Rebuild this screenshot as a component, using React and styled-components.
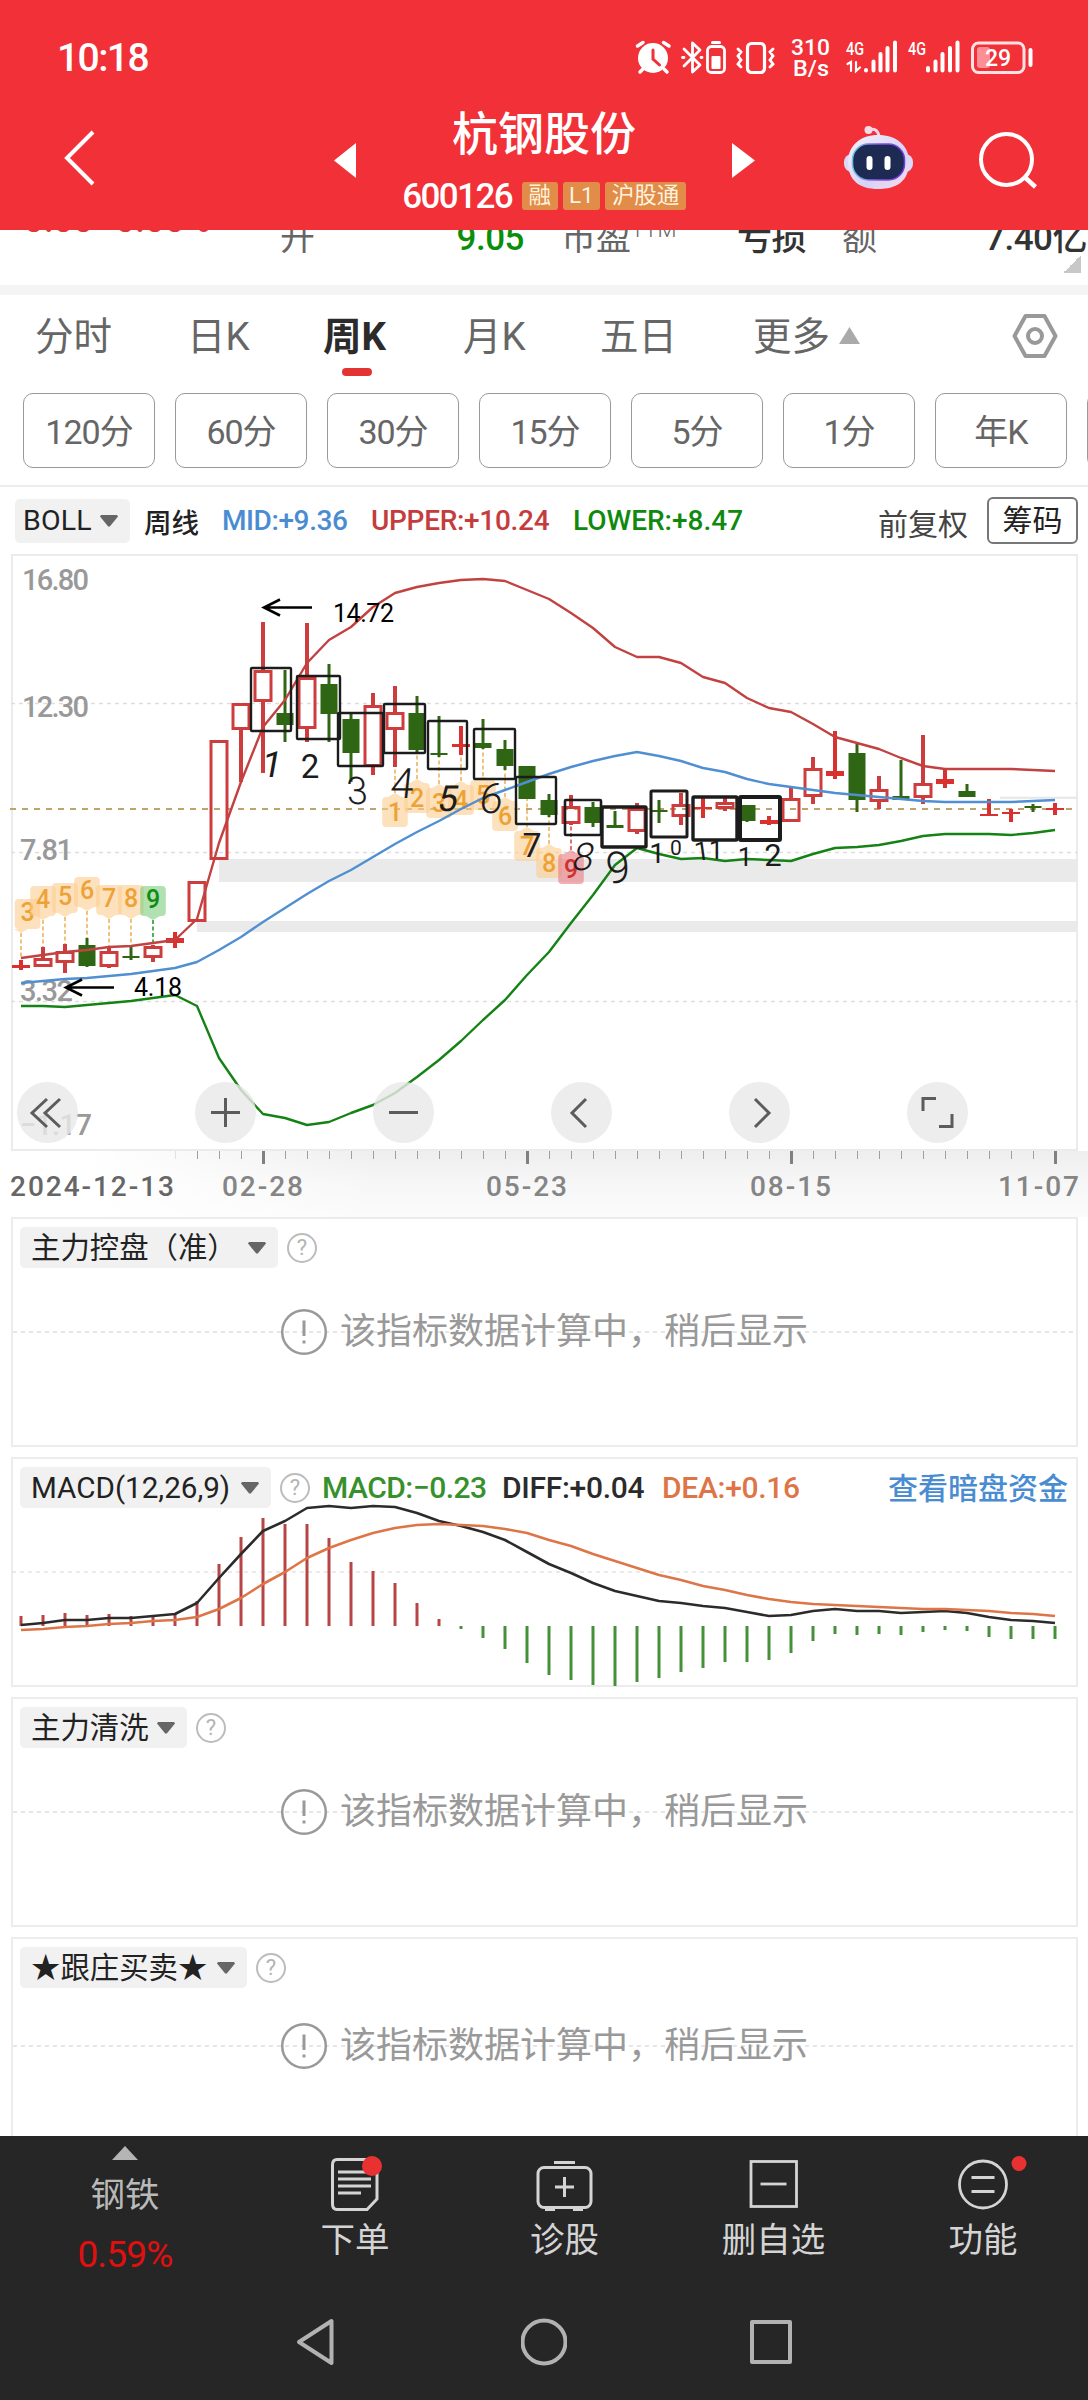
import React from 'react';
import styled, { createGlobalStyle } from 'styled-components';

const GlobalStyle = createGlobalStyle`
  body {
    margin: 0;
    background: #fff;
  }
  * {
    box-sizing: border-box;
  }
`;

const fonts = "Roboto, 'Noto Sans CJK SC', sans-serif";

const Screen = styled.div`
  width: 1088px;
  height: 2400px;
  display: flex;
  flex-direction: column;
  overflow: hidden;
  background: #fff;
  color: #333;
  font-family: ${fonts};
`;

/* ---------- header ---------- */

const Header = styled.header`
  flex: none;
  height: 230px;
  background: #f13037;
  color: #fff;
`;

const StatusBar = styled.div`
  height: 94px;
  padding: 20px 55px 0 57px;
  display: flex;
  justify-content: space-between;
`;

const Clock = styled.span`
  font-size: 39px;
  line-height: 77px;
  font-weight: 500;
  letter-spacing: -1.6px;
`;

const TitleBar = styled.div`
  height: 136px;
  display: grid;
  grid-template-columns: 334px 22px 376px 23px 88px 70px 66px 56px;
  align-items: start;
`;

const TitleIcon = styled.div`
  padding-top: ${p => p.$top}px;
  padding-left: ${p => p.$left || 0}px;
  svg {
    display: block;
  }
`;

const TitleText = styled.div`
  display: flex;
  flex-direction: column;
  align-items: center;
`;

const StockName = styled.h1`
  margin: 10px 0 0;
  font-size: 46px;
  line-height: 60px;
  font-weight: 500;
`;

const StockCode = styled.div`
  display: flex;
  align-items: center;
  gap: 5px;
  height: 64px;
  font-size: 35px;
  letter-spacing: -1.6px;
`;

const CodeText = styled.span`
  margin-right: 5px;
  font-weight: 500;
`;

const Tag = styled.span`
  height: 28px;
  padding: 0 6.5px;
  border-radius: 3px;
  background: #e28c4a;
  color: #fff3df;
  font-size: 22.5px;
  line-height: 27px;
  letter-spacing: 0;
`;

/* ---------- quote ---------- */

const QuoteClip = styled.div`
  flex: none;
  height: 55px;
  overflow: hidden;
  display: flex;
  align-items: flex-start;
`;

const QuoteRow = styled.div`
  flex: none;
  width: 1088px;
  margin-top: -11px;
  display: grid;
  grid-template-columns: 280px 60px 184px 190px 92px 97px 184px;
  font-size: 35px;
  line-height: 40px;
  white-space: nowrap;
`;

const Change = styled.div`
  padding-left: 24px;
  color: #e03535;
  line-height: 4px;
  font-weight: 500;
  span + span {
    margin-left: 22px;
  }
`;

const QuoteLabel = styled.div`
  padding-left: ${p => p.$indent || 0}px;
  color: #666;
  sup {
    font-size: 22px;
    line-height: 0;
    vertical-align: 13px;
    font-weight: 300;
  }
`;

const QuoteValue = styled.div`
  text-align: right;
  font-weight: 500;
  letter-spacing: -0.5px;
  color: ${p => p.$color || '#333'};
`;

const Corner = styled.div`
  flex: none;
  width: 18px;
  height: 18px;
  margin: 25px 0 0 -25px;
  background: linear-gradient(135deg, transparent 50%, #c8c8c8 50%);
`;

const Band = styled.div`
  flex: none;
  height: 10px;
  background: #f4f4f4;
`;

/* ---------- period tabs ---------- */

const Tabs = styled.nav`
  flex: none;
  height: 98px;
  display: grid;
  grid-template-columns: 155px 132px 141px 136px 154px 294px 76px;
  align-items: start;
  padding-top: 16px;
`;

const Tab = styled.div`
  display: flex;
  flex-direction: column;
  padding-left: ${p => p.$indent}px;
  color: ${p => (p.$active ? '#2b2b2b' : '#666')};
  font-size: 38.5px;
  line-height: 51px;
  font-weight: ${p => (p.$active ? 700 : 400)};
  white-space: nowrap;
  &::after {
    content: '';
    display: ${p => (p.$active ? 'block' : 'none')};
    width: 30px;
    height: 8px;
    margin: 6px 0 0 19px;
    border-radius: 4px;
    background: #e33434;
  }
`;

const More = styled.div`
  display: flex;
  align-items: center;
  gap: 9px;
  padding-left: 35px;
  color: #666;
  font-size: 38.5px;
  line-height: 51px;
  svg {
    margin-bottom: 3px;
  }
`;

const Periods = styled.div`
  flex: none;
  display: flex;
  gap: 20px;
  height: 94px;
  padding-left: 23px;
  border-bottom: 2px solid #ececec;
  overflow: hidden;
`;

const Period = styled.button`
  flex: none;
  width: 132px;
  height: 75px;
  padding: 0 0 3px;
  border: 1.5px solid #999;
  border-radius: 10px;
  background: #fff;
  color: #666;
  font: 400 34px ${fonts};
  letter-spacing: -1px;
`;

/* ---------- indicators ---------- */

const BollRow = styled.div`
  flex: none;
  height: 66px;
  display: flex;
  align-items: center;
  padding: 1px 10px 0 15px;
  font-size: 28px;
  white-space: nowrap;
`;

const Pill = styled.div`
  display: flex;
  align-items: center;
  justify-content: space-between;
  width: ${p => p.$width}px;
  height: ${p => p.$height || 41}px;
  padding: 0 12px 0 ${p => p.$indent || 11}px;
  border-radius: 5px;
  background: #f1f1f1;
  color: #222;
  font-size: ${p => p.$size || 29.4}px;
  line-height: 36px;
  letter-spacing: ${p => p.$spacing || 0}px;
  white-space: nowrap;
`;

const Reading = styled.span`
  width: ${p => p.$width}px;
  margin-left: ${p => p.$gap}px;
  color: ${p => p.$color};
  font-size: ${p => p.$size || 28}px;
  font-weight: 500;
  letter-spacing: ${p => p.$spacing || 0}px;
  white-space: nowrap;
`;

const Adjust = styled.span`
  margin-left: auto;
  margin-right: 19px;
  padding-top: 2px;
  color: #444;
  font-size: 30px;
`;

const Chips = styled.button`
  width: 91px;
  height: 47px;
  padding: 0;
  border: 2px solid #777;
  border-radius: 6px;
  background: #fff;
  color: #222;
  font: 400 30px/40px ${fonts};
`;

const ChartArea = styled.div`
  flex: none;
  position: relative;
  height: 664px;
  svg {
    display: block;
  }
`;

const ChartControls = styled.div`
  position: absolute;
  left: 17px;
  top: 529px;
  display: flex;
  gap: 117px;
`;

const Control = styled.button`
  width: 61px;
  height: 61px;
  padding: 0;
  border: 0;
  border-radius: 50%;
  background: rgba(233, 233, 233, 0.82);
`;

const Panel = styled.section`
  flex: none;
  width: 1067px;
  height: ${p => p.$height || 230}px;
  margin: 0 0 ${p => (p.$last ? 0 : 10)}px 11px;
  border: 2px solid #ececec;
  ${p => p.$last && 'border-bottom: 0;'}
  display: grid;
  grid-template: 100% / 100%;
  > * {
    grid-area: 1 / 1;
  }
`;

const PanelHead = styled.div`
  align-self: start;
  display: flex;
  align-items: center;
  height: 41px;
  margin: 8px 0 0 7px;
`;

const Help = styled.span`
  flex: none;
  width: 30px;
  height: 30px;
  margin-left: 9px;
  border: 2px solid #bcbcbc;
  border-radius: 50%;
  color: #b4b4b4;
  font-size: 22px;
  line-height: 26px;
  text-align: center;
`;

const PanelLink = styled.a`
  margin-left: auto;
  margin-right: 8px;
  padding-bottom: 4px;
  color: #4a8cd2;
  font-size: 30px;
  font-weight: 500;
`;

const Pending = styled.div`
  display: flex;
  align-items: center;
  gap: 12px;
  margin-bottom: ${p => (p.$cut ? -17 : 0)}px;
  padding-left: 267px;
  color: #999;
  font-size: 36px;
  background: linear-gradient(90deg, #e6e6e6 50%, transparent 50%) 0 50% / 8px 1.5px repeat-x;
  span {
    line-height: 50px;
  }
`;

/* ---------- bottom ---------- */

const Footer = styled.footer`
  flex: none;
  height: 264px;
  background: #262626;
  color: #d4d4d4;
`;

const Actions = styled.div`
  display: grid;
  grid-template-columns: 250px 210px 209px 209px 210px;
  height: 158px;
  justify-items: center;
`;

const Action = styled.div`
  display: flex;
  flex-direction: column;
  align-items: center;
  padding-top: 18px;
  font-size: 34.5px;
  line-height: 50px;
  svg {
    display: block;
    margin-bottom: 3px;
    overflow: visible;
  }
`;

const Sector = styled.div`
  display: flex;
  flex-direction: column;
  align-items: center;
  padding-top: 10px;
  color: #b9b9b9;
  font-size: 34.5px;
  line-height: 50px;
  svg {
    display: block;
    margin-bottom: 10px;
  }
`;

const SectorChange = styled.span`
  margin-top: 10px;
  color: #e01010;
  font-size: 37px;
  letter-spacing: -0.8px;
`;

const SystemNav = styled.div`
  height: 106px;
  display: flex;
  justify-content: center;
  gap: 180.5px;
  padding-top: 24px;
`;

/* ---------- data ---------- */

// one week is 22px wide
const x = i => 21 + 22 * i;

const R = 'red';
const F = 'solid';
const G = 'green';

// [kind, wick top, body top, body bottom, wick bottom]
const candles = [
  [F, 960, 965, 968, 970], [R, 947, 958, 967, 967], [R, 944, 951, 963, 973], [G, 938, 945, 966, 967],
  [R, 947, 951, 967, 968], [G, 947, 956, 958, 960], [R, 945, 946, 958, 962], [F, 932, 938, 943, 948],
  [R, 881, 881, 922, 922], [R, 740, 740, 860, 860], [R, 703, 703, 730, 782], [R, 622, 670, 702, 773],
  [G, 670, 713, 725, 742], [R, 623, 677, 729, 742], [G, 664, 684, 714, 742], [G, 712, 719, 753, 782],
  [R, 693, 705, 767, 775], [R, 686, 712, 730, 767], [G, 696, 713, 750, 752], [G, 716, 753, 755, 757],
  [F, 726, 744, 747, 755], [G, 719, 743, 748, 749], [G, 740, 749, 766, 770], [G, 766, 766, 799, 799],
  [G, 794, 800, 815, 817], [R, 795, 806, 824, 825], [G, 802, 807, 823, 827], [G, 811, 825, 828, 828],
  [R, 803, 808, 832, 834], [G, 800, 810, 812, 823], [R, 793, 804, 817, 825], [F, 798, 807, 809, 818],
  [R, 797, 802, 809, 811], [G, 805, 805, 821, 822], [F, 816, 820, 824, 825], [R, 786, 798, 822, 822],
  [R, 757, 768, 797, 804], [F, 731, 771, 776, 779], [G, 744, 753, 800, 812], [R, 776, 789, 802, 809],
  [G, 760, 796, 800, 800], [R, 735, 783, 798, 804], [F, 770, 779, 784, 788], [G, 784, 791, 797, 797],
  [F, 799, 814, 816, 816], [F, 809, 812, 814, 822], [G, 804, 806, 808, 812], [F, 803, 808, 810, 815],
];

const upper = [
  958, 955, 952, 950, 947, 946, 943, 940, 919, 843, 782, 727, 700, 663, 640, 627, 607, 593, 587, 583, 580, 579, 581,
  590, 599, 613, 628, 647, 657, 657, 663, 677, 683, 698, 708, 712, 724, 737, 743, 749, 758, 766, 769, 769, 769, 769,
  770, 771,
];

const mid = [
  983, 981, 979, 978, 976, 974, 971, 968, 962, 950, 937, 922, 908, 894, 881, 870, 857, 844, 832, 821, 809, 798, 790,
  782, 774, 767, 761, 756, 752, 756, 761, 768, 772, 779, 784, 787, 790, 793, 795, 797, 799, 801, 802, 802, 802, 802,
  801, 800,
];

const lower = [
  1006, 1006, 1007, 1005, 1003, 1001, 998, 995, 1006, 1058, 1090, 1114, 1118, 1125, 1122, 1113, 1105, 1093, 1077,
  1060, 1041, 1020, 1000, 975, 952, 923, 895, 865, 848, 854, 859, 858, 861, 859, 860, 861, 854, 848, 847, 845, 841,
  836, 834, 834, 834, 835, 833, 830,
];

const macd = [
  1616, 1615, 1613, 1615, 1614, 1616, 1615, 1614, 1601, 1564, 1537, 1518, 1524, 1524, 1538, 1562, 1571, 1583, 1603,
  1619, 1629, 1638, 1649, 1663, 1675, 1680, 1685, 1686, 1682, 1678, 1672, 1668, 1662, 1662, 1660, 1653, 1641, 1634,
  1635, 1634, 1635, 1632, 1630, 1631, 1637, 1639, 1639, 1639,
];

const diff = [
  1625, 1623, 1620, 1620, 1618, 1618, 1616, 1614, 1603, 1578, 1554, 1531, 1521, 1508, 1506, 1508, 1506, 1507, 1513,
  1521, 1526, 1532, 1540, 1552, 1564, 1573, 1583, 1591, 1596, 1601, 1603, 1606, 1608, 1612, 1616, 1615, 1611, 1609,
  1611, 1611, 1613, 1612, 1611, 1613, 1617, 1620, 1621, 1623,
];

const dea = [
  1630, 1629, 1627, 1626, 1624, 1623, 1621, 1620, 1617, 1609, 1598, 1584, 1572, 1558, 1548, 1540, 1533, 1528, 1525,
  1524, 1525, 1526, 1529, 1533, 1540, 1546, 1554, 1561, 1568, 1575, 1580, 1586, 1590, 1595, 1599, 1602, 1604, 1605,
  1606, 1607, 1608, 1609, 1609, 1610, 1611, 1613, 1614, 1616,
];

// [week, digit, box top, stem end, colour]
const flagsAbove = [
  [0, 3, 899, 958], [1, 4, 886, 947], [2, 5, 883, 944], [3, 6, 877, 938],
  [4, 7, 885, 947], [5, 8, 885, 947], [6, 9, 886, 943, 'green'],
];
const flagsBelow = [
  [17, 1, 797, 767], [18, 2, 783, 752], [19, 3, 788, 757], [20, 4, 785, 755], [21, 5, 780, 749],
  [22, 6, 801, 770], [23, 7, 831, 799], [24, 8, 848, 817], [25, 9, 854, 825, 'red'],
];

const flagColors = {
  orange: ['rgba(252, 205, 143, 0.6)', '#eea236', '#f0c27c'],
  green: ['rgba(125, 204, 125, 0.6)', '#128c12', '#55ad55'],
  red: ['rgba(232, 120, 128, 0.6)', '#d03030', '#e07070'],
};

// boxes drawn over the weeks: [left, top, right, bottom, pen]
const inkBoxes = [
  [251, 668, 291, 731, 2.4], [297, 676, 340, 739, 2.4], [338, 713, 383, 766, 2.4], [384, 704, 425, 753, 2.4],
  [428, 721, 467, 769, 2.4], [474, 729, 515, 779, 2.4], [516, 777, 556, 824, 2.4], [565, 800, 601, 835, 2.6],
  [602, 807, 646, 847, 3.4], [651, 791, 687, 837, 3], [693, 797, 737, 840, 3.4], [740, 797, 780, 840, 4],
];

// [text, centre x, baseline, size, slant]
const inkDigits = [
  ['1', 270, 777, 36, -10], ['2', 310, 778, 33, 0], ['3', 358, 804, 38, 4], ['4', 401, 798, 42, -6],
  ['5', 446, 811, 36, -10], ['6', 490, 813, 42, -6], ['7', 532, 857, 34, 0], ['8', 581, 870, 38, -12],
  ['9', 619, 883, 44, 4], ['1', 657, 863, 28, 0], ['0', 676, 855, 21, 0], ['1', 703, 860, 26, 8],
  ['1', 716, 859, 26, 0], ['1', 745, 866, 26, 0], ['2', 773, 866, 31, 0],
];

const points = ys => ys.map((y, i) => `${x(i)},${y}`).join(' ');

/* ---------- drawings ---------- */

const Candle = ({ kind, at, high, top, bottom, low }) => {
  if (kind === G) {
    return (
      <g fill="#2f6613">
        <rect x={at - 1.5} y={high} width="3" height={low - high} />
        <rect x={at - 8.5} y={top} width="17" height={bottom - top} />
      </g>
    );
  }
  if (kind === F) {
    return (
      <g fill="#d93030">
        <rect x={at - 2} y={high} width="4" height={low - high} />
        <rect x={at - 9} y={top} width="18" height={bottom - top} />
      </g>
    );
  }
  return (
    <g fill="#cd3d3d">
      <rect x={at - 2} y={high} width="4" height={top - high} />
      <rect x={at - 2} y={bottom} width="4" height={low - bottom} />
      <rect x={at - 8} y={top + 1.5} width="16" height={bottom - top - 3} fill="none" stroke="#cd3d3d" strokeWidth="3" />
    </g>
  );
};

const Flag = ({ week, digit, top, end, color = 'orange', below }) => {
  const [bg, fg, stem] = flagColors[color];
  const at = x(week);
  const cx = Math.max(at, 27.5);
  const bottom = top + 30;
  const tip = below
    ? `${at - 7},${top} ${at},${top - 4} ${at + 7},${top}`
    : `${at - 7},${bottom} ${at},${bottom + 4} ${at + 7},${bottom}`;
  return (
    <g>
      <line x1={at} x2={at} y1={below ? top - 4 : bottom + 4} y2={end} stroke={stem} strokeWidth="2" strokeDasharray="4 2.5" />
      <rect x={cx - 12.8} y={top} width="25.6" height="30" rx="4" fill={bg} />
      <polygon points={tip} fill={bg} />
      <text x={cx} y={top + (below ? 24 : 22)} fontSize="25" fontWeight="500" textAnchor="middle" fill={fg}>
        {digit}
      </text>
    </g>
  );
};

const MainChart = () => (
  <svg width="1088" height="664" viewBox="0 553 1088 664" fontFamily={fonts}>
    <defs>
      <linearGradient id="axis" x1="0" x2="0" y1="0" y2="1">
        <stop offset="0" stopColor="#eeeeee" />
        <stop offset="0.5" stopColor="#f7f7f7" />
        <stop offset="1" stopColor="#fbfbfb" />
      </linearGradient>
      <linearGradient id="axisFade" x1="0" x2="1" y1="0" y2="0">
        <stop offset="0" stopColor="#fff" />
        <stop offset="0.08" stopColor="#fff" />
        <stop offset="0.35" stopColor="#fff" stopOpacity="0" />
      </linearGradient>
    </defs>
    <rect x="0" y="1151" width="1088" height="66" fill="url(#axis)" />
    <rect x="0" y="1151" width="1088" height="66" fill="url(#axisFade)" />
    <path d="M12 1150V555H1077V1150Z" fill="#fff" stroke="#ebebeb" strokeWidth="2" />
    <g stroke="#dedede" strokeWidth="1.3" strokeDasharray="4 4">
      <line x1="11" x2="1077" y1="703.5" y2="703.5" />
      <line x1="11" x2="1077" y1="852.5" y2="852.5" />
      <line x1="11" x2="1077" y1="1001.5" y2="1001.5" />
    </g>
    <rect x="219" y="859" width="859" height="23" fill="#eaeaea" />
    <rect x="197" y="921" width="881" height="11" fill="#eaeaea" />
    <line x1="1000" x2="1077" y1="797.7" y2="797.7" stroke="#e6e6e6" strokeWidth="2" />
    <line x1="10" x2="1077" y1="809" y2="809" stroke="#c0a36c" strokeWidth="2" strokeDasharray="6 6" />
    <g fontSize="29" fontWeight="500" fill="#999">
      <text x="22" y="590" textLength="67">16.80</text>
      <text x="22" y="717" textLength="67">12.30</text>
      <text x="20" y="860" textLength="53">7.81</text>
      <text x="20" y="1001" textLength="53">3.32</text>
      <text x="20" y="1135" textLength="72">−1.17</text>
    </g>

    {flagsAbove.map(([week, digit, top, end, color]) => (
      <Flag key={week} week={week} digit={digit} top={top} end={end} color={color} />
    ))}
    {flagsBelow.map(([week, digit, top, end, color]) => (
      <Flag key={week} week={week} digit={digit} top={top} end={end} color={color} below />
    ))}
    {candles.map(([kind, high, top, bottom, low], i) => (
      <Candle key={i} kind={kind} at={x(i)} high={high} top={top} bottom={bottom} low={low} />
    ))}

    <g fill="none" strokeWidth="2.4" strokeLinejoin="round">
      <polyline points={points(upper)} stroke="#c24141" />
      <polyline points={points(mid)} stroke="#4f8fd2" />
      <polyline points={points(lower)} stroke="#158215" />
    </g>

    <g fill="none" stroke="#000" strokeWidth="2.6">
      <path d="M312 607.5H264M280 599.5L264 607.5L280 615.5" />
      <path d="M114 987.5H66M82 979.5L66 987.5L82 995.5" />
    </g>
    <g fontSize="25" fill="#000">
      <text x="333" y="622" textLength="61">14.72</text>
      <text x="134" y="996" textLength="48">4.18</text>
    </g>

    <g fill="none" stroke="#1c1c1c">
      {inkBoxes.map(([l, t, r, b, pen]) => (
        <rect key={l} x={l} y={t} width={r - l} height={b - t} rx="1" strokeWidth={pen} />
      ))}
    </g>
    <g fill="#1c1c1c" textAnchor="middle">
      {inkDigits.map(([text, cx, y, size, slant]) => (
        <text key={cx} fontSize={size} fontWeight={size > 37 ? 300 : 400} transform={`translate(${cx} ${y}) skewX(${slant})`}>
          {text}
        </text>
      ))}
    </g>

    {candles.map((c, i) => {
      if (i < 7) return null;
      const major = i % 12 === 11;
      return (
        <line
          key={i}
          x1={x(i) + 0.5}
          x2={x(i) + 0.5}
          y1="1151"
          y2={major ? 1164 : 1159}
          stroke={i === 7 ? '#e2e2e2' : major ? '#808080' : '#a0a0a0'}
          strokeWidth={major ? 3 : 1}
        />
      );
    })}
    <g fontSize="28" fontWeight="500" fill="#858585">
      <text x="10" y="1195.5" textLength="164" fill="#666">2024-12-13</text>
      <text x="222" y="1195.5" textLength="81">02-28</text>
      <text x="486" y="1195.5" textLength="81">05-23</text>
      <text x="750" y="1195.5" textLength="81">08-15</text>
      <text x="998" y="1195.5" textLength="81">11-07</text>
    </g>
  </svg>
);

const MacdChart = () => (
  <svg width="1063" height="226" viewBox="13 1459 1063 226" overflow="visible">
    <line x1="12" x2="1077" y1="1572" y2="1572" stroke="#e4e4e4" strokeWidth="1.5" strokeDasharray="4 4" />
    {macd.map((y, i) => (
      <rect
        key={i}
        x={x(i) - 1.5}
        y={Math.min(y, 1626)}
        width="3"
        height={Math.abs(y - 1626)}
        fill={y < 1626 ? '#b84545' : '#46903a'}
      />
    ))}
    <g fill="none" strokeWidth="2.6" strokeLinejoin="round">
      <polyline points={points(diff)} stroke="#2b2b2b" />
      <polyline points={points(dea)} stroke="#de7547" />
    </g>
  </svg>
);

const Caret = ({ up, width = 18, height = 12, color = '#666' }) => (
  <svg width={width} height={height} viewBox="0 0 18 12" preserveAspectRatio="none">
    <path d={up ? 'M9 0L18 12H0Z' : 'M1 0H17L18 1.5L9.8 11.5H8.2L0 1.5Z'} fill={color} />
  </svg>
);

const StatusIcons = () => (
  <svg width="400" height="70" viewBox="633 20 400 70" fill="none" stroke="#fff" strokeLinecap="round">
    {/* alarm */}
    <circle cx="653" cy="58" r="15" fill="#fff" stroke="none" />
    <path d="M637.500 46L643 42.500M669 46L663.500 42.500M643 69L640 72M664 69L667 72" strokeWidth="3.500" />
    <path d="M653 50V59L659.500 65" stroke="#f13037" strokeWidth="3" />
    {/* bluetooth */}
    <path d="M684 49L700 65L692.500 72V43L700 50L684 66" strokeWidth="2.800" strokeLinejoin="round" />
    <path d="M682.500 57.500h1.500M701 57.500h1" strokeWidth="2.800" />
    <rect x="707.500" y="46.500" width="17" height="26" rx="4" strokeWidth="2.800" />
    <path d="M712.500 42.500H719.500" strokeWidth="3" />
    <rect x="711.500" y="56" width="9" height="13" rx="1" fill="#fff" stroke="none" />
    {/* vibrate */}
    <rect x="747.500" y="43.500" width="17" height="29" rx="4" strokeWidth="3.200" />
    <path d="M738 49l3 3-3 4 3 4-3 4 3 3M773 49l-3 3 3 4-3 4 3 4-3 3" strokeWidth="2.800" />
    <g fill="#fff" stroke="none" fontFamily={fonts} fontWeight="500">
      <text x="791" y="54.500" fontSize="22.500" textLength="39" lengthAdjust="spacingAndGlyphs">310</text>
      <text x="793" y="75.500" fontSize="22.500" textLength="36" lengthAdjust="spacingAndGlyphs">B/s</text>
      <text x="846" y="55" fontSize="19" textLength="18" lengthAdjust="spacingAndGlyphs">4G</text>
      <text x="908" y="55" fontSize="19" textLength="18" lengthAdjust="spacingAndGlyphs">4G</text>
    </g>
    {/* signal */}
    <path d="M866 70V70.500M873.500 61.500V70.500M880.500 54V70.500M887.500 48V70.500M895 42.500V70.500" strokeWidth="4" />
    <path d="M928 68V70.500M935.500 61.500V70.500M942.500 54V70.500M950 48V70.500M957.500 42.500V70.500" strokeWidth="4" />
    <path d="M847.500 64L851 62V71M856 62V71L860 67.500" strokeWidth="2.200" />
    {/* battery */}
    <rect x="972.500" y="43" width="51.500" height="29.500" rx="6" strokeWidth="3" stroke="#ffe3e4" />
    <rect x="977" y="47" width="13" height="21" rx="3" fill="#fb8f94" stroke="none" />
    <path d="M1030.500 50V65" strokeWidth="4" />
    <text x="985" y="65.500" fontSize="23" fontWeight="500" fill="#fff" stroke="none" fontFamily={fonts} textLength="26">29</text>
  </svg>
);

const Robot = () => (
  <svg width="70" height="66" viewBox="843 125 70 66">
    <defs>
      <linearGradient id="shell" x1="0" x2="1" y1="0" y2="1">
        <stop offset="0" stopColor="#f4f2fc" />
        <stop offset="0.6" stopColor="#d8d2f6" />
        <stop offset="1" stopColor="#f6dcec" />
      </linearGradient>
      <linearGradient id="rim" x1="0" x2="1" y1="0" y2="0">
        <stop offset="0" stopColor="#6cc4e8" />
        <stop offset="0.5" stopColor="#8a52e0" />
        <stop offset="1" stopColor="#6a3ee0" />
      </linearGradient>
    </defs>
    <path d="M869 130Q877 127 879 136" fill="none" stroke="#f5d7e4" strokeWidth="3" />
    <circle cx="868.500" cy="130" r="4" fill="#f3dbe8" />
    <rect x="844" y="154" width="69" height="18" rx="8" fill="#dcd8f8" />
    <path d="M878 135C896 135 909 145 909 162C909 181 897 189 878 189C860 189 848 181 848 162C848 145 861 135 878 135Z" fill="url(#shell)" />
    <rect x="852.500" y="144" width="52" height="36" rx="16" fill="#1d2b52" stroke="url(#rim)" strokeWidth="1.500" />
    <path d="M869.500 159V167M887.500 159V167" stroke="#fff" strokeWidth="6" strokeLinecap="round" />
  </svg>
);

const PendingMessage = ({ cut }) => (
  <Pending $cut={cut}>
    <svg width="48" height="48" viewBox="0 0 48 48" fill="none" stroke="#999">
      <circle cx="24" cy="24" r="21.800" strokeWidth="2.500" />
      <path d="M24 12.500V28M24 32.500V35.500" strokeWidth="3" />
    </svg>
    <span>该指标数据计算中，稍后显示</span>
  </Pending>
);

const periods = ['120分', '60分', '30分', '15分', '5分', '1分', '年K', ''];

const controls = [
  'M30 17L15 31L30 45M43 17L28 31L43 45',
  'M16 30.500H45M30.500 16V45',
  'M16 30.500H45',
  'M35 17L21 31L35 45',
  'M26 17L40 31L26 45',
  'M16 29V16.500H29M45 32V44.500H32',
];

const App = () => (
  <Screen>
    <GlobalStyle />
    <Header>
      <StatusBar>
        <Clock>10:18</Clock>
        <StatusIcons />
      </StatusBar>
      <TitleBar>
        <TitleIcon $top={36} $left={64}>
          <svg width="32" height="56" viewBox="0 0 32 56" fill="none" stroke="#fff" strokeWidth="4">
            <path d="M29 2L3 28L29 54" />
          </svg>
        </TitleIcon>
        <TitleIcon $top={49}>
          <svg width="22" height="35" viewBox="0 0 22 35" fill="#fff">
            <path d="M22 0V35L0 17.500Z" />
          </svg>
        </TitleIcon>
        <TitleText>
          <StockName>杭钢股份</StockName>
          <StockCode>
            <CodeText>600126</CodeText>
            <Tag>融</Tag>
            <Tag>L1</Tag>
            <Tag>沪股通</Tag>
          </StockCode>
        </TitleText>
        <TitleIcon $top={49}>
          <svg width="23" height="35" viewBox="0 0 23 35" fill="#fff">
            <path d="M0 0V35L23 17.500Z" />
          </svg>
        </TitleIcon>
        <span />
        <TitleIcon $top={31}>
          <Robot />
        </TitleIcon>
        <span />
        <TitleIcon $top={36}>
          <svg width="60" height="60" viewBox="0 0 60 60" fill="none" stroke="#fff" strokeWidth="4">
            <circle cx="27.500" cy="29.500" r="25.500" />
            <path d="M45.500 47L56.500 57" strokeWidth="4.500" />
          </svg>
        </TitleIcon>
      </TitleBar>
    </Header>

    <QuoteClip>
      <QuoteRow>
        <Change>
          <span>0.00</span>
          <span>0.00%</span>
        </Change>
        <QuoteLabel>开</QuoteLabel>
        <QuoteValue $color="#0a8f0a">9.05</QuoteValue>
        <QuoteLabel $indent={37}>
          市盈<sup>TTM</sup>
        </QuoteLabel>
        <QuoteValue>亏损</QuoteValue>
        <QuoteLabel $indent={36}>额</QuoteLabel>
        <QuoteValue>7.40亿</QuoteValue>
      </QuoteRow>
      <Corner />
    </QuoteClip>
    <Band />

    <Tabs>
      <Tab $indent={35}>分时</Tab>
      <Tab $indent={32}>日K</Tab>
      <Tab $indent={36} $active>周K</Tab>
      <Tab $indent={35}>月K</Tab>
      <Tab $indent={36}>五日</Tab>
      <More>
        更多
        <Caret up width={21} height={17} color="#aaa" />
      </More>
      <svg width="46" height="50" viewBox="0 0 46 50" fill="none" stroke="#999" strokeWidth="4" strokeLinejoin="round">
        <path d="M13.500 5H32.500L43.500 25L32.500 45H13.500L2.500 25Z" />
        <circle cx="23" cy="25" r="7" />
      </svg>
    </Tabs>
    <Periods>
      {periods.map(p => (
        <Period key={p}>{p}</Period>
      ))}
    </Periods>

    <BollRow>
      <Pill $width={115} $height={44} $indent={8} $size={28.5} $spacing={0.2}>
        BOLL
        <Caret />
      </Pill>
      <Reading $width={54} $gap={14} $color="#222" $size={27.5}>周线</Reading>
      <Reading $width={124} $gap={24} $color="#4a8cd2" $spacing={-0.4}>MID:+9.36</Reading>
      <Reading $width={178} $gap={25} $color="#c43c3c" $spacing={-0.3}>UPPER:+10.24</Reading>
      <Reading $width={171} $gap={24} $color="#0f8a0f">LOWER:+8.47</Reading>
      <Adjust>前复权</Adjust>
      <Chips>筹码</Chips>
    </BollRow>

    <ChartArea>
      <MainChart />
      <ChartControls>
        {controls.map(d => (
          <Control key={d}>
            <svg width="61" height="61" viewBox="0 0 61 61" fill="none" stroke="#5c5c5c" strokeWidth="3">
              <path d={d} />
            </svg>
          </Control>
        ))}
      </ChartControls>
    </ChartArea>

    <Panel>
      <PendingMessage />
      <PanelHead>
        <Pill $width={258}>
          主力控盘（准）
          <Caret />
        </Pill>
        <Help>?</Help>
      </PanelHead>
    </Panel>
    <Panel>
      <MacdChart />
      <PanelHead>
        <Pill $width={251} $size={29.6}>
          MACD(12,26,9)
          <Caret />
        </Pill>
        <Help>?</Help>
        <Reading $width={166} $gap={12} $color="#36912c" $size={30} $spacing={-0.5}>MACD:−0.23</Reading>
        <Reading $width={142} $gap={14} $color="#2b2b2b" $size={30} $spacing={-0.3}>DIFF:+0.04</Reading>
        <Reading $width={137} $gap={18} $color="#de7547" $size={30} $spacing={-0.3}>DEA:+0.16</Reading>
        <PanelLink>查看暗盘资金</PanelLink>
      </PanelHead>
    </Panel>
    <Panel>
      <PendingMessage />
      <PanelHead>
        <Pill $width={167}>
          主力清洗
          <Caret />
        </Pill>
        <Help>?</Help>
      </PanelHead>
    </Panel>
    <Panel $last $height={199}>
      <PendingMessage cut />
      <PanelHead>
        <Pill $width={227}>
          ★跟庄买卖★
          <Caret />
        </Pill>
        <Help>?</Help>
      </PanelHead>
    </Panel>

    <Footer>
      <Actions>
        <Sector>
          <Caret up width={26} height={14} color="#b5b5b5" />
          钢铁
          <SectorChange>0.59%</SectorChange>
        </Sector>
        <Action>
          <svg width="50" height="58" viewBox="331 2154 50 58" fill="none" stroke="#d4d4d4" strokeWidth="3">
            <path d="M338 2159.500H372Q378 2159.500 378 2165V2199L368 2209.500H338Q333.500 2209.500 333.500 2204V2165Q333.500 2159.500 338 2159.500Z" />
            <path d="M339 2172H372M339 2179H372M339 2186H372M339 2193H362" />
            <circle cx="373" cy="2166" r="10" fill="#e83232" stroke="none" />
          </svg>
          下单
        </Action>
        <Action>
          <svg width="58" height="58" viewBox="536 2154 58 58" fill="none" stroke="#d4d4d4" strokeWidth="3">
            <rect x="538" y="2167.500" width="53" height="40" rx="6" />
            <path d="M554 2162.500H575M564.500 2177V2197M555 2187H574M545 2209.500H555M573 2209.500H583" />
          </svg>
          诊股
        </Action>
        <Action>
          <svg width="50" height="58" viewBox="748.500 2154 50 58" fill="none" stroke="#d4d4d4" strokeWidth="2.800">
            <rect x="750.500" y="2161.500" width="45.500" height="45" />
            <path d="M760 2184H786" />
          </svg>
          删自选
        </Action>
        <Action>
          <svg width="50" height="58" viewBox="957.500 2154 50 58" fill="none" stroke="#d4d4d4" strokeWidth="2.800">
            <circle cx="982.500" cy="2184.500" r="23.500" />
            <path d="M971 2177.500H994M971 2191.500H994" />
            <circle cx="1018.500" cy="2163.500" r="7.500" fill="#e83232" stroke="none" />
          </svg>
          功能
        </Action>
      </Actions>
      <SystemNav>
        {['M4 24L36.500 3V45Z', '', 'M4 4H42V44H4Z'].map((d, i) => (
          <svg key={i} width="46" height="48" viewBox="0 0 46 48" fill="none" stroke="#b2b2b2" strokeWidth="4" strokeLinejoin="round">
            {d ? <path d={d} /> : <circle cx="23" cy="24" r="21.500" />}
          </svg>
        ))}
      </SystemNav>
    </Footer>
  </Screen>
);

export default App;
